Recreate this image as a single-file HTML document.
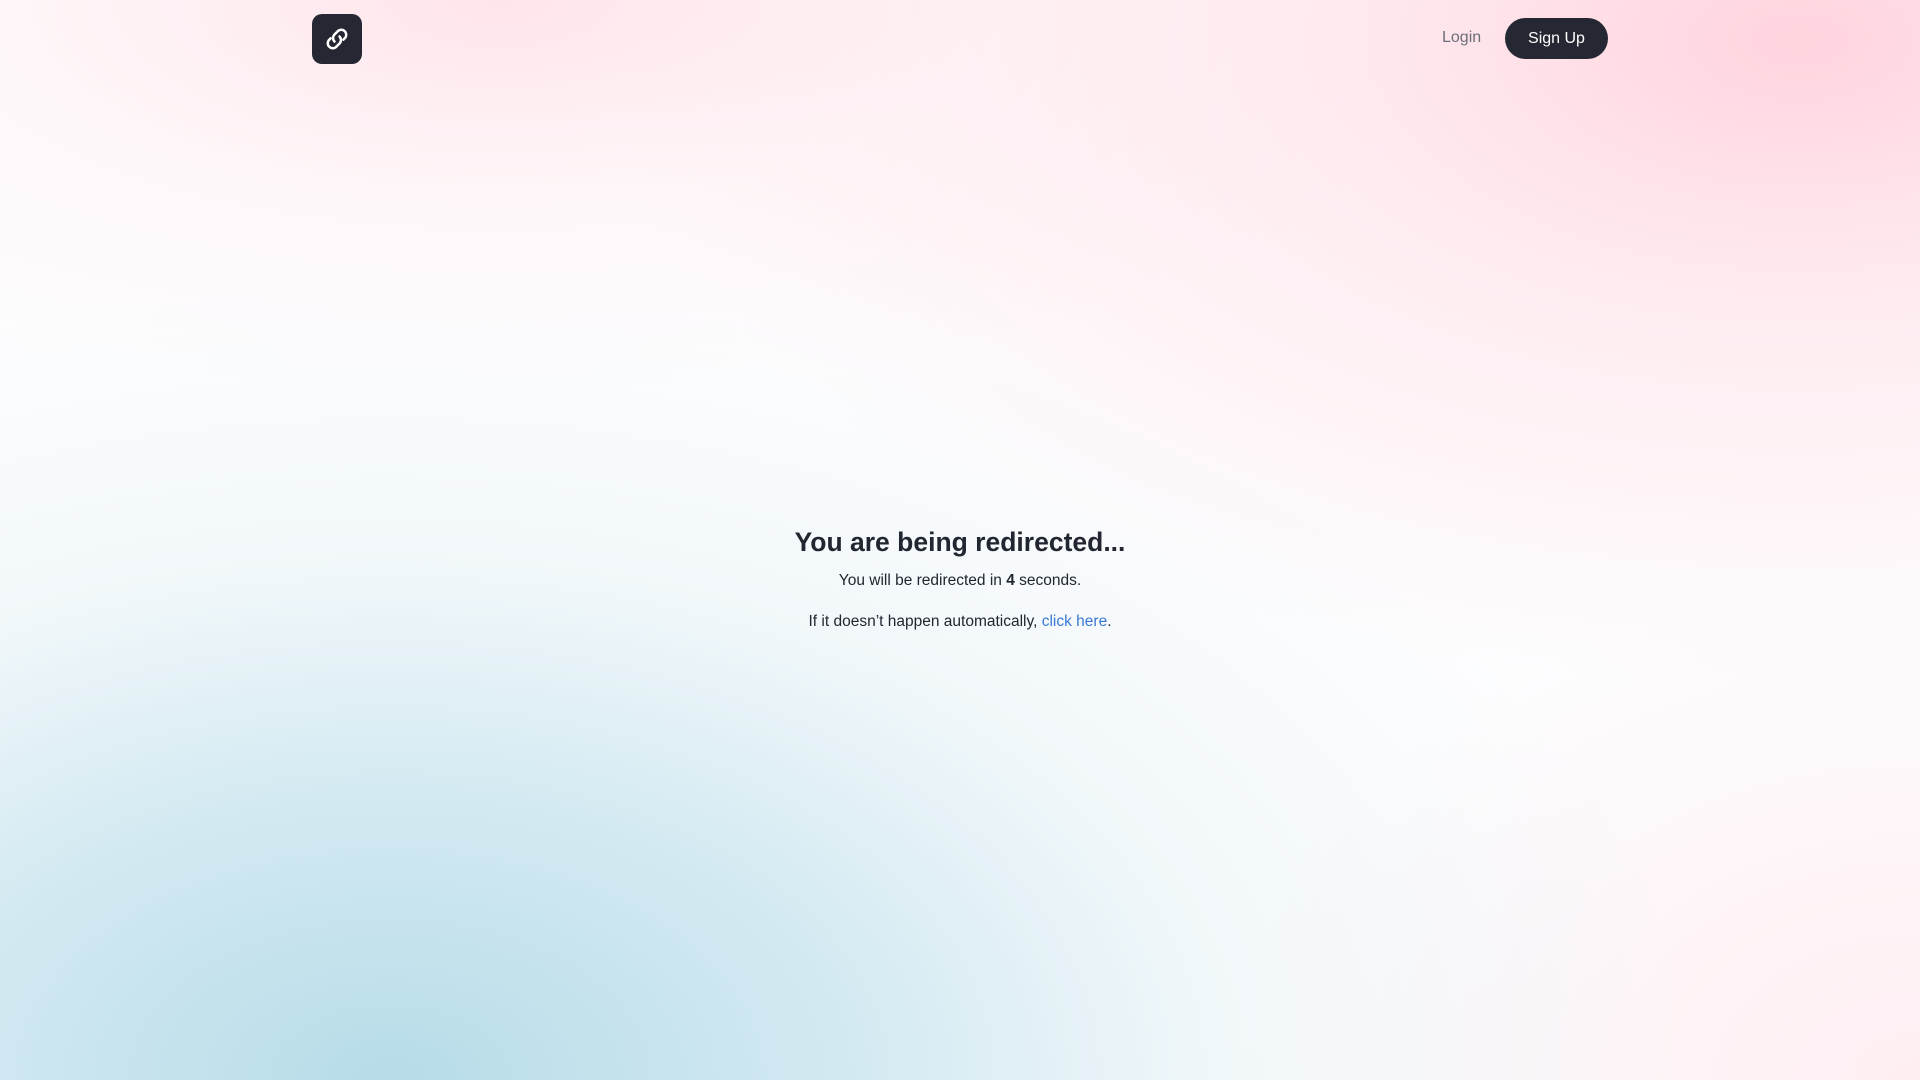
<!DOCTYPE html>
<html><head><meta charset="utf-8"><style>
html,body{margin:0;width:1920px;height:1080px;overflow:hidden;font-family:"Liberation Sans",Roboto,sans-serif;color:#222630}
body{position:relative;background:#fff;
background:
radial-gradient(ellipse 1300px 800px at 390px 1080px,rgba(182,220,232,1) 0%,rgba(200,228,238,0.8) 35%,rgba(225,240,245,0.4) 65%,rgba(255,255,255,0) 100%),
radial-gradient(ellipse 700px 500px at 1920px 1080px,rgba(255,228,234,0.6) 0%,rgba(255,255,255,0) 100%),
radial-gradient(ellipse 1200px 650px at 1800px 40px,rgba(255,212,222,1) 0%,rgba(255,228,234,0.7) 40%,rgba(255,255,255,0) 100%),
radial-gradient(ellipse 1000px 400px at 500px 0px,rgba(255,226,232,0.9) 0%,rgba(255,240,243,0.5) 50%,rgba(255,255,255,0) 100%),
#fdfdfe;}
.logo{position:absolute;left:312px;top:14px;width:50px;height:50px;border-radius:10px;background:#252833;display:flex;align-items:center;justify-content:center}
.login{position:absolute;left:1442px;top:29px;font-size:16px;color:#6b6f78}
.btn{position:absolute;left:1505px;top:18px;width:103px;height:41px;border-radius:21px;background:#252833;color:#fff;font-size:16px;display:flex;align-items:center;justify-content:center}
.c{position:absolute;left:0;width:1920px;text-align:center}
h1{margin:0;font-size:26.5px;font-weight:600}
a{color:#3a78d6;text-decoration:none}
</style></head><body>
<div class="logo"><svg width="30" height="30" viewBox="0 0 24 24" fill="none" stroke="#fff" stroke-width="2" stroke-linecap="round"><path d="M10 14a4 4 0 0 1 0-5.6l3-3a4 4 0 0 1 5.6 5.6l-1.5 1.5"/><path d="M14 10a4 4 0 0 1 0 5.6l-3 3a4 4 0 0 1-5.6-5.6l1.5-1.5"/></svg></div>
<div class="login">Login</div>
<div class="btn">Sign Up</div>
<div class="c" style="top:527px"><h1>You are being redirected...</h1></div>
<div class="c" style="top:572px;font-size:15.5px">You will be redirected in <b>4</b> seconds.</div>
<div class="c" style="top:613px;font-size:15.5px">If it doesn’t happen automatically, <a>click here</a>.</div>
</body></html>
